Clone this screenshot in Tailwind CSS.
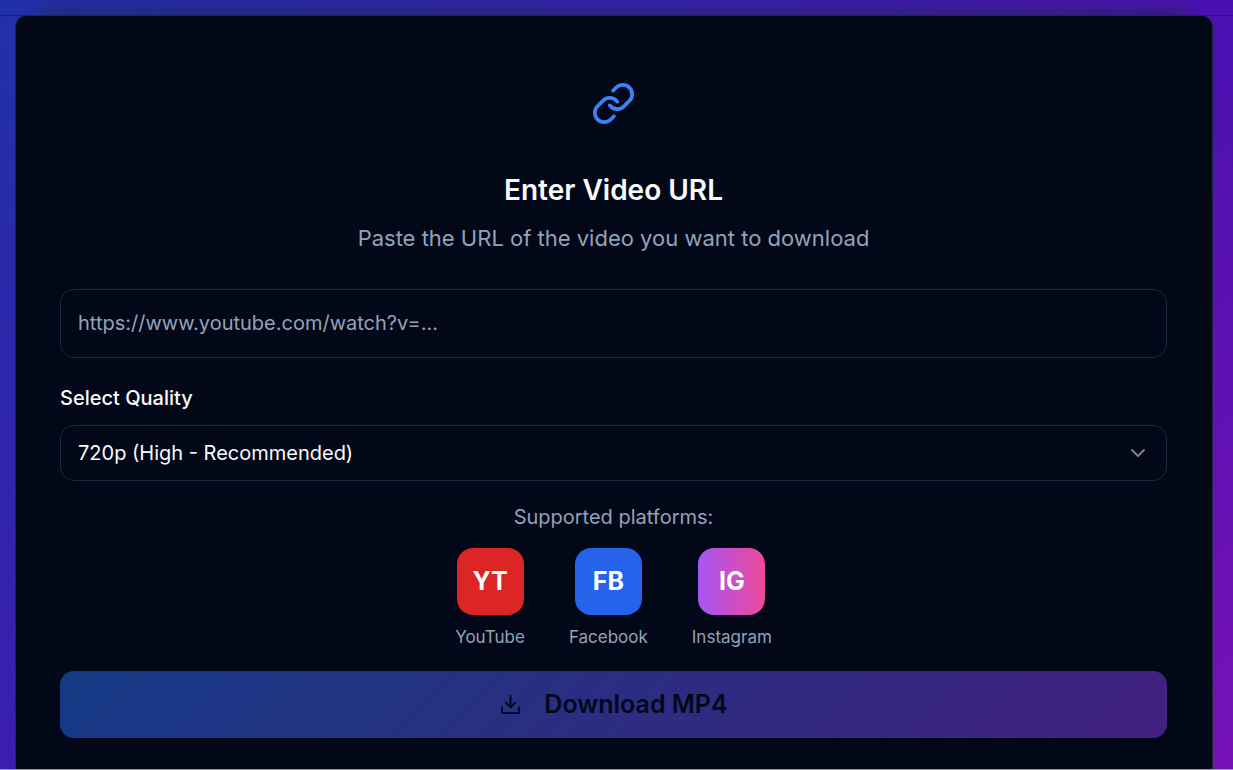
<!DOCTYPE html>
<html lang="en">
<head>
<meta charset="utf-8">
<meta name="viewport" content="width=device-width, initial-scale=1">
<title>Video Downloader</title>
<script src="https://cdn.jsdelivr.net/npm/@tailwindcss/browser@4"></script>
</head>
<body class="font-[Inter,sans-serif] text-[#f8fafc]">
<div class="flex h-screen flex-col overflow-hidden border-b border-[#9a9ba6] bg-[linear-gradient(135deg,#2030a8_0%,#3a1eae_38%,#4a10b0_62%,#7612b5_100%)]">
  <div class="flex h-[15px] shrink-0 items-end overflow-hidden pr-5 pl-[15px]">
    <div class="mx-8 h-px grow bg-slate-800/40 shadow-[0_2px_16px_6px_rgba(30,41,59,0.6)]"></div>
  </div>
  <main class="grow border-t border-[#1e293b] pr-5 pl-[15px]">
    <section class="-mt-px min-h-full rounded-t-xl border border-b-0 border-[#1e293b] bg-[#020817] pt-[65px] pr-[45px] pb-8 pl-11">
      <header class="flex flex-col items-center text-center">
        <svg class="size-[45px] text-[#3b82f6]" viewBox="0 0 24 24" fill="none" stroke="currentColor" stroke-width="2" stroke-linecap="round" stroke-linejoin="round" aria-hidden="true">
          <path d="M10 13a5 5 0 0 0 7.54.54l3-3a5 5 0 0 0-7.07-7.07l-1.72 1.71"/>
          <path d="M14 11a5 5 0 0 0-7.54-.54l-3 3a5 5 0 0 0 7.07 7.07l1.71-1.71"/>
        </svg>
        <h1 class="mt-11 text-[28px] leading-10 font-semibold">Enter Video URL</h1>
        <p class="mt-3 text-[22px] leading-8 text-[#94a3b8]">Paste the URL of the video you want to download</p>
      </header>
      <form class="mt-[35px] flex flex-col">
        <input type="url" aria-label="Video URL" placeholder="https://www.youtube.com/watch?v=..." class="h-[69px] w-full rounded-[14px] border border-[#1e293b] bg-transparent px-[17px] pb-[2px] text-[20px] placeholder:text-[#94a3b8]">
        <label for="quality" class="mt-[26px] text-[20px] leading-7 font-medium">Select Quality</label>
        <div class="relative mt-[13px]">
          <select id="quality" class="h-14 w-full appearance-none rounded-[14px] border border-[#1e293b] bg-[#020817] px-[17px] text-[20px]">
            <option>720p (High - Recommended)</option>
          </select>
          <svg class="pointer-events-none absolute top-4 right-[17px] size-6 text-[#f8fafc]/50" viewBox="0 0 24 24" fill="none" stroke="currentColor" stroke-width="2" stroke-linecap="round" stroke-linejoin="round" aria-hidden="true"><path d="m6 9 6 6 6-6"/></svg>
        </div>
        <p class="mt-[22px] text-center text-[20px] leading-7 text-[#94a3b8]">Supported platforms:</p>
        <ul class="mt-[17px] flex justify-center gap-11 text-[17px] leading-6 text-[#94a3b8]">
          <li class="flex flex-col items-center gap-[10px]"><span class="flex size-[67px] items-center justify-center rounded-2xl bg-[#dc2626] pb-px text-[25px] font-bold text-white">YT</span>YouTube</li>
          <li class="flex flex-col items-center gap-[10px]"><span class="flex size-[67px] items-center justify-center rounded-2xl bg-[#2563eb] pb-px text-[25px] font-bold text-white">FB</span>Facebook</li>
          <li class="flex flex-col items-center gap-[10px]"><span class="flex size-[67px] items-center justify-center rounded-2xl bg-[linear-gradient(90deg,#a855f7,#ec4899)] pb-px text-[25px] font-bold text-white">IG</span>Instagram</li>
        </ul>
        <button type="button" class="mt-[22px] flex h-[67px] items-center justify-center gap-[22px] rounded-[14px] bg-[linear-gradient(135deg,#153a85,#42207f)] text-[25px] font-semibold text-[#020817]">
          <svg class="size-[23px]" viewBox="0 0 24 24" fill="none" stroke="currentColor" stroke-width="2" stroke-linecap="round" stroke-linejoin="round" aria-hidden="true"><path d="M21 15v4a2 2 0 0 1-2 2H5a2 2 0 0 1-2-2v-4"/><path d="m7 10 5 5 5-5"/><path d="M12 15V3"/></svg>
          Download MP4
        </button>
      </form>
    </section>
  </main>
</div>
</body>
</html>
